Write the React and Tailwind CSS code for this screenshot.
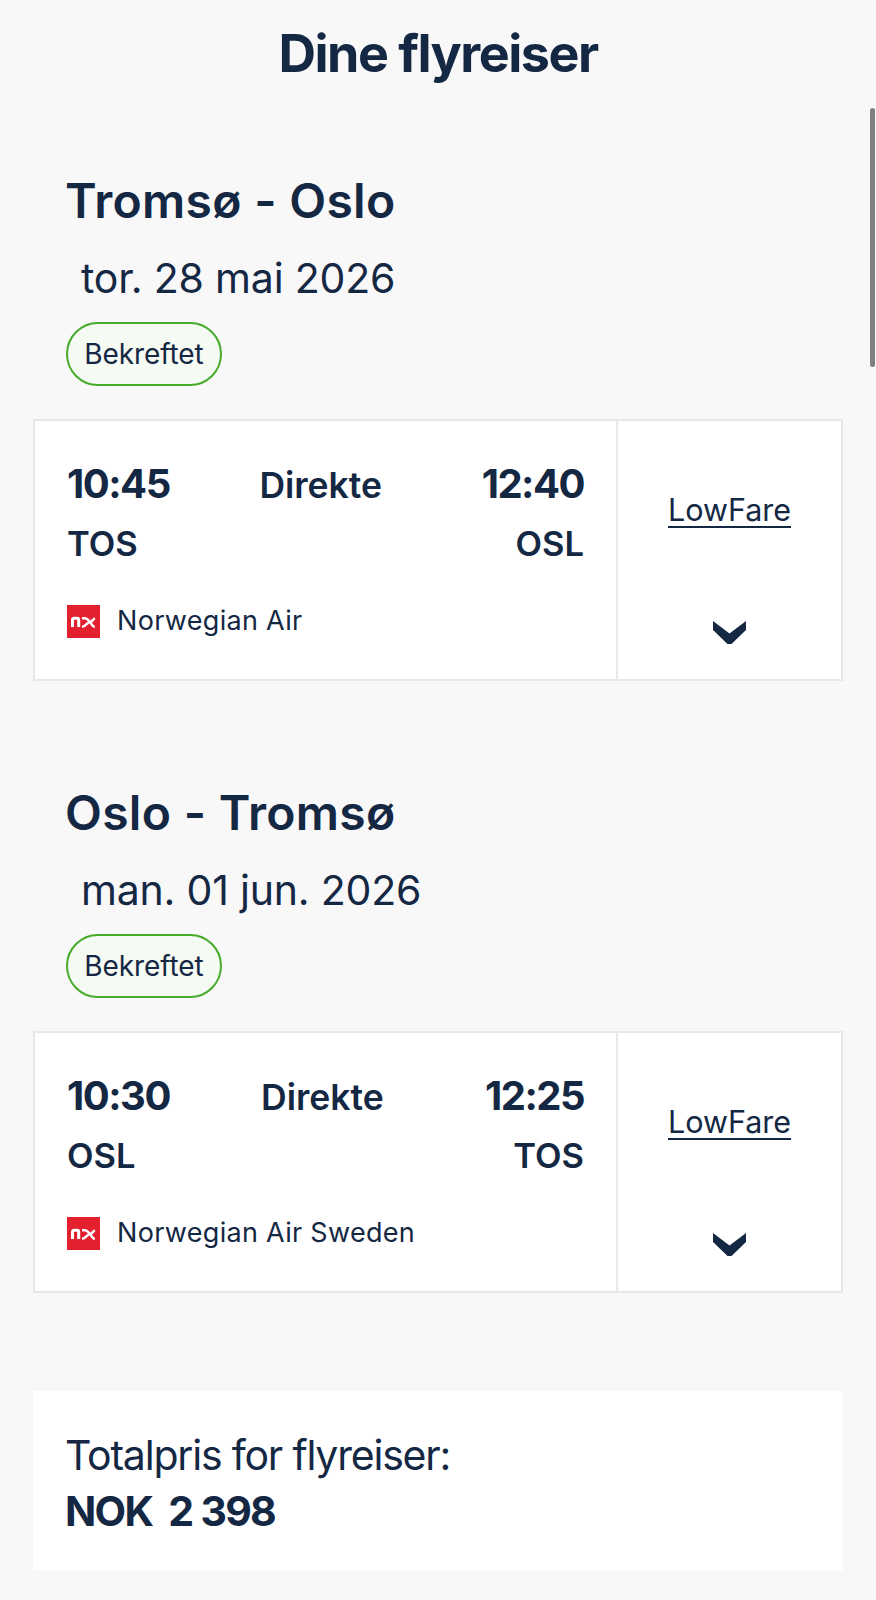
const TRIPS = [
  {
    route: "Tromsø - Oslo",
    date: "tor. 28 mai 2026",
    depart: "10:45",
    arrive: "12:40",
    from: "TOS",
    to: "OSL",
    airline: "Norwegian Air",
  },
  {
    route: "Oslo - Tromsø",
    date: "man. 01 jun. 2026",
    depart: "10:30",
    arrive: "12:25",
    from: "OSL",
    to: "TOS",
    airline: "Norwegian Air Sweden",
  },
];

function NorwegianLogo() {
  return (
    <svg width="33" height="33" viewBox="0 0 33 33" className="shrink-0">
      <rect width="33" height="33" fill="#e2202e" />
      <path d="M5.500 22v-7c0-1.200.6-1.800 1.800-1.800h2.600c1.200 0 1.800.6 1.800 1.800v7" fill="none" stroke="#fff" strokeWidth="3" />
      <path d="M15 13.200h3c2.500 0 3.500 2.500 5 3.800M15 21.800c4 0 5-4.800 8-4.800 2 0 3-2.300 4.800-3.800M23 17c1.200 1.500 2.500 4.800 4.800 4.800" fill="none" stroke="#fff" strokeWidth="2.400" />
    </svg>
  );
}

function FareChevron() {
  return (
    <svg width="33" height="23" viewBox="0 0 33 23" className="mt-[92px]">
      <polygon points="0,0 16.500,12.500 33,0 33,9 18.500,23 14.500,23 0,9" fill="currentColor" />
    </svg>
  );
}

function FlightCard({ trip }) {
  return (
    <div className="mt-[33px] flex h-[262px] border-2 border-[#e8e8e4] bg-white">
      <div className="flex w-[581px] flex-col px-8 pt-[36px]">
        <div className="flex items-center justify-between">
          <span className="text-[40px] leading-[50px] font-bold tracking-[-1.500px]">{trip.depart}</span>
          <span className="mt-[4px] mr-[10px] text-[35.500px] leading-[50px] font-semibold">Direkte</span>
          <span className="text-[40px] leading-[50px] font-bold tracking-[-1.500px]">{trip.arrive}</span>
        </div>
        <div className="mt-[12px] flex justify-between text-[34.500px] leading-[42px] font-semibold">
          <span>{trip.from}</span>
          <span>{trip.to}</span>
        </div>
        <div className="mt-[39px] flex items-center gap-[17px]">
          <NorwegianLogo />
          <span className="text-[27px] leading-[34px] tracking-[0.3px]">{trip.airline}</span>
        </div>
      </div>
      <div className="flex flex-1 flex-col items-center border-l-2 border-[#e8e8e4] pt-[70px]">
        <span className="text-[30.500px] leading-[38px] underline underline-offset-[5px] decoration-2">LowFare</span>
        <FareChevron />
      </div>
    </div>
  );
}

export default function App() {
  return (
    <div className="relative h-[1600px] overflow-hidden bg-[#f8f8f8] font-['Inter',sans-serif] text-[#142743]">
      <div className="absolute top-[108px] right-[1px] h-[259px] w-[5px] rounded-full bg-[#808080]" />

      <h1 className="pt-[24px] text-center text-[52px] leading-[60px] font-bold tracking-[-1.500px]">Dine flyreiser</h1>

      <div className="px-[33px]">
        {TRIPS.map((trip, i) => (
          <section key={trip.route} className={i === 0 ? "mt-[89px]" : "mt-[104px]"}>
            <h2 className="pl-[32px] text-[48px] leading-[56px] font-semibold tracking-[0.3px]">{trip.route}</h2>
            <p className="mt-[24px] pl-[48px] text-[41px] leading-[50px] tracking-[-0.200px]">{trip.date}</p>
            <div className="mt-[19px] ml-[33px] flex h-[64px] w-[156px] items-center justify-center rounded-[32px] border-2 border-[#45ab2a] bg-[#f5faf3] text-[28px] tracking-[-0.100px]">
              Bekreftet
            </div>
            <FlightCard trip={trip} />
          </section>
        ))}

        <div className="mt-[98px] h-[179px] bg-white px-[32px] pt-[38px]">
          <p className="text-[41px] leading-[52px] tracking-[-1.200px]">Totalpris for flyreiser:</p>
          <p className="mt-[2px] text-[41px] leading-[56px] font-bold tracking-[-1.700px]">NOK&nbsp; 2 398</p>
        </div>
      </div>
    </div>
  );
}
